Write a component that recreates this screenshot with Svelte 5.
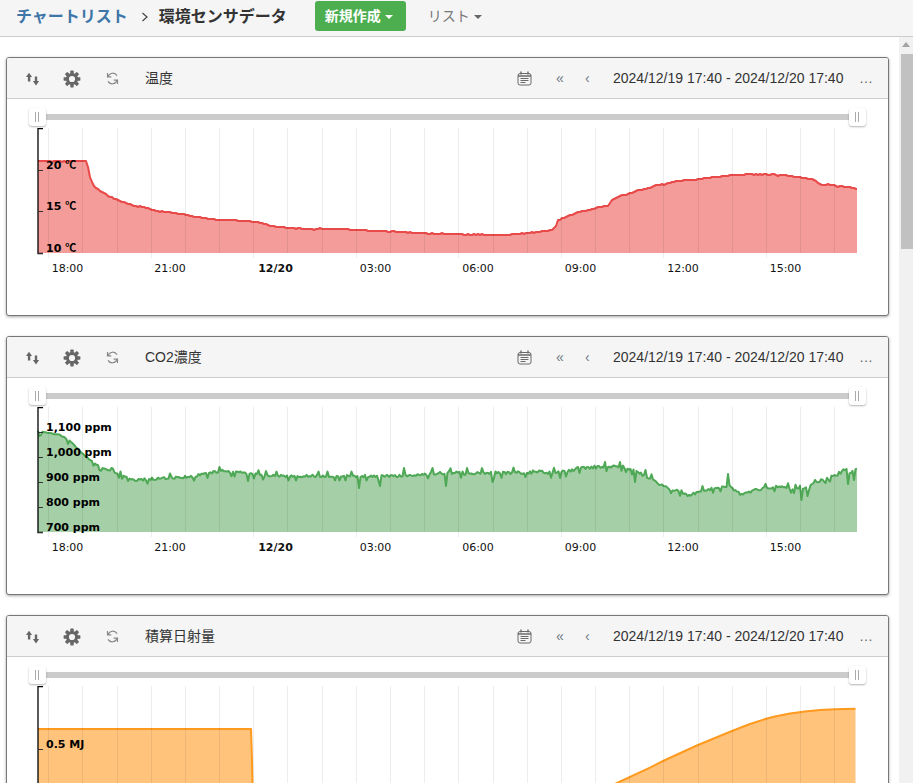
<script>
  const gridXs = Array.from({ length: 24 }, (_, i) => Math.round(48.3 + i * 34.17) + 0.5);
  const timeLabels = [
    { x: 67.5, t: '18:00' }, { x: 170, t: '21:00' }, { x: 275.5, t: '12/20', bold: true },
    { x: 375.5, t: '03:00' }, { x: 478, t: '06:00' }, { x: 580.5, t: '09:00' },
    { x: 683, t: '12:00' }, { x: 785.5, t: '15:00' }
  ];

  const tempBase = [[38,161],[50,161.5],[58,161],[65,161.5],[75,161],[86,161],[88,167],[90,177],[93,185],[100,191],[110,197],[120,201],[135,206],[145,207],[152,210],[165,212],[183,214],[190,216],[198,217],[212,219],[225,220],[250,221],[265,224],[270,226],[290,228],[310,229],[315,230],[319,228],[325,229],[340,229],[380,231],[420,233],[460,234.5],[480,234.5],[500,235],[530,233],[552,230],[556,226],[558,220],[566,217],[580,212],[595,208],[608,206],[612,200],[623,195],[630,193],[640,190],[650,188],[655,185],[665,184.5],[672,182],[680,181],[700,179],[712,177],[725,176],[740,174.5],[775,174.5],[778,176],[782,175],[795,177],[812,179],[818,183],[822,185],[828,184],[835,186],[848,187],[857,189]];

  const co2Base = [[38,431],[60,435],[70,441],[85,456],[100,467],[118,474],[135,480],[165,478],[190,477],[205,474],[220,471],[245,473],[270,476],[300,476],[340,476],[400,476],[440,473],[500,473],[530,472],[560,473],[580,468],[600,467],[620,466],[630,469],[650,478],[665,487],[680,491],[690,496],[700,491],[720,487],[730,486],[740,494],[760,489],[780,486],[800,490],[815,483],[830,480],[835,473],[857,471]];
  const co2Spikes = { 40:436, 68:444, 87:460, 210:481, 220:467, 248:481, 312:485, 342:469, 359:488, 380:486, 404:468, 417:483, 433:468, 446:486, 493:482, 567:466, 591:462, 605:462, 620:462, 635:482, 646:470, 681:505, 699:482, 728:474, 732:493, 783:497, 789:478, 802:500, 808:496, 815:480, 834:467, 848:484, 854:480 };

  function at(pts, x) {
    for (let i = 1; i < pts.length; i++) {
      const [a, b] = [pts[i - 1], pts[i]];
      if (x <= b[0]) return a[1] + (b[1] - a[1]) * (x - a[0]) / (b[0] - a[0]);
    }
    return pts[pts.length - 1][1];
  }
  function rnd(x) {
    const s = Math.sin(x * 12.9898) * 43758.5453;
    return s - Math.floor(s);
  }

  const temp = [];
  for (let x = 38; x <= 857; x += 2) {
    temp.push([x, Math.round(at(tempBase, x) + (rnd(x) - 0.5) * 0.8)]);
  }
  temp.push([857, 189]);

  const co2 = [];
  for (let x = 38; x <= 857; x += 1.5) {
    const k = Math.round(x);
    const r = rnd(x);
    let amp = x > 130 ? 3 : 1;
    if (x > 430 && x < 600) amp = 4;
    if (x > 640 && x < 700) amp = 3.5;
    if (x > 820) amp = 7;
    const noise = (r - 0.5) * amp + (r > 0.93 ? 3 : 0) - (r < 0.05 ? 3 : 0);
    co2.push([x, +(co2Spikes[k] ?? at(co2Base, x) + noise).toFixed(1)]);
  }

  const solar = [[38,729],[251,729],[252,760],[253,811],[560,811],[617,783],[650,767.7],[663,761],[698,745],[732,731],[750,724],[767,718.5],[775,716.5],[790,713.5],[805,711.5],[820,710],[835,709.3],[855.5,708.7]];

  const charts = [
    {
      title: '温度', data: temp, offset: 0, right: 857, line: '#e84a4a', fill: '#f39c99', showX: true,
      ticks: [{ y: 170, t: '20', u: '℃' }, { y: 211, t: '15', u: '℃' }, { y: 253, t: '10', u: '℃' }]
    },
    {
      title: 'CO2濃度', data: co2, offset: 279, right: 857, line: '#4ea855', fill: '#a5cfa6', showX: true,
      ticks: [{ y: 432, t: '1,100 ppm' }, { y: 457, t: '1,000 ppm' }, { y: 482, t: '900 ppm' }, { y: 507, t: '800 ppm' }, { y: 532, t: '700 ppm' }]
    },
    {
      title: '積算日射量', data: solar, offset: 558, right: 855.5, line: '#ff9a1f', fill: '#ffc37c', showX: false,
      ticks: [{ y: 749, t: '0.5 MJ' }]
    }
  ];

  const linePts = (c) => c.data.map(([x, y]) => `${x},${y - c.offset}`).join(' ');
  const areaPts = (c) => `38,253 ${linePts(c)} ${c.right},253`;
  const teeth = [0, 45, 90, 135, 180, 225, 270, 315];
</script>

<div class="page">
  <nav class="navbar">
    <a class="crumb">チャートリスト</a>
    <svg class="sep" width="8" height="12" viewBox="0 0 8 12"><path d="M1.5 2l4.5 4-4.5 4" /></svg>
    <span class="current">環境センサデータ</span>
    <button class="new">新規作成<i class="caret white"></i></button>
    <span class="list">リスト<i class="caret"></i></span>
  </nav>

  <div class="content">
    <main>
      {#each charts as c}
        <section class="panel">
          <header>
            <span class="tool sort">
              <svg width="14" height="14" viewBox="0 0 14 14"><path class="solid" d="M3 .8L6.1 5H4.3V9.6H1.9V5H0zM8.8 4.6h2.4V9h1.9L10 13.4 6.9 9h1.9z" /></svg>
            </span>
            <span class="tool gear">
              <svg width="18" height="18" viewBox="-9 -9 18 18">
                {#each teeth as a}<rect class="solid" x="-1.7" y="-8.4" width="3.4" height="4" rx=".6" transform="rotate({a})" />{/each}
                <circle class="ring" r="4.6" />
              </svg>
            </span>
            <span class="tool sync">
              <svg width="15" height="15" viewBox="0 0 15 15" class="refresh"><path d="M3 5.6A5 5 0 0 1 12 4.6M12 9.4A5 5 0 0 1 3 10.4M2.5 2v3.8h3.8M12.5 13V9.2H8.7" /></svg>
            </span>
            <h2>{c.title}</h2>
            <span class="right">
              <svg class="cal" width="15" height="15" viewBox="0 0 15 15"><rect x="1" y="2.5" width="13" height="11.5" rx="2" /><path class="top" d="M4 .5v3M11 .5v3M1 5h13" /><path d="M3.5 7.5h8M3.5 9.5h8M3.5 11.5h5" /></svg>
              <span class="pager dbl">«</span>
              <span class="pager sgl">‹</span>
              <span class="range">2024/12/19 17:40 - 2024/12/20 17:40</span>
              <span class="more">…</span>
            </span>
          </header>
          <div class="slider">
            <span class="handle left"></span>
            <span class="handle end"></span>
          </div>
          <svg class="chart" width="881" height="160" viewBox="7 128 881 160">
            <polygon points={areaPts(c)} fill={c.fill} />
            <polyline points={linePts(c)} fill="none" stroke={c.line} stroke-width="2" stroke-linejoin="round" />
            {#each gridXs as x, i}
              <line class="grid" x1={x} x2={x} y1="128" y2={i % 3 === 0 ? 258 : 253} />
            {/each}
            <path class="axis" d="M43 128.5H38V253.5H43" />
            {#each c.ticks as t}
              <line class="tick" x1="38" x2="43" y1={t.y - c.offset + 0.5} y2={t.y - c.offset + 0.5} />
              <text class="ylabel" x="46" y={t.y - c.offset - 1}>{t.t}{#if t.u}<tspan class="unit" dx="4">{t.u}</tspan>{/if}</text>
            {/each}
            {#if c.showX}
              {#each timeLabels as l}
                <text class="xlabel" class:bold={l.bold} x={l.x} y="272" text-anchor="middle">{l.t}</text>
              {/each}
            {/if}
          </svg>
        </section>
      {/each}
    </main>
    <aside class="scrollbar">
      <span class="arrow"></span>
      <span class="thumb"></span>
    </aside>
  </div>
</div>

<style>
  :global(body) { margin: 0; overflow: hidden; background: #fff; }
  .page {
    height: 783px;
    overflow: hidden;
    display: flex;
    flex-direction: column;
    font-family: "Liberation Sans", "Noto Sans CJK JP", sans-serif;
    font-size: 14px;
    color: #333;
  }
  .navbar {
    flex: none;
    box-sizing: border-box;
    height: 37px;
    background: #f5f5f5;
    border-bottom: 1px solid #ccc;
    display: flex;
    align-items: center;
    padding: 0 0 5px 16px;
  }
  .crumb { font-size: 16px; font-weight: 700; color: #3f76a8; padding-bottom: 2px; }
  .sep { margin: 2px 0 0 13px; }
  .sep path { fill: none; stroke: #444; stroke-width: 1.2; }
  .current { font-size: 16px; font-weight: 700; color: #333; margin-left: 10px; padding-bottom: 2px; }
  .new {
    margin-left: 28px;
    width: 91px;
    height: 30px;
    box-sizing: border-box;
    padding: 0 0 2px 10px;
    border: 0;
    border-radius: 3px;
    background: #4cae4f;
    color: #fff;
    font: 700 14px "Liberation Sans", "Noto Sans CJK JP", sans-serif;
    text-align: left;
  }
  .list { margin-left: 22px; color: #777; padding-bottom: 2px; }
  .caret {
    display: inline-block;
    margin-left: 4px;
    vertical-align: middle;
    border-top: 4px solid #666;
    border-left: 4px solid transparent;
    border-right: 4px solid transparent;
  }
  .caret.white { border-top-color: #fff; }

  .content { flex: 1; display: flex; min-height: 0; }
  main { flex: 1; min-width: 0; padding: 20px 10px 0 6px; }
  .panel {
    box-sizing: border-box;
    height: 259px;
    margin-bottom: 20px;
    border: 1px solid #777;
    border-radius: 3px;
    background: #fff;
    box-shadow: 0 1px 3px rgba(0, 0, 0, .35);
    overflow: hidden;
  }
  header {
    box-sizing: border-box;
    height: 41px;
    background: #f5f5f5;
    border-bottom: 1px solid #ccc;
    display: flex;
    align-items: center;
    padding: 0 0 0 6px;
  }
  .tool { width: 40px; display: flex; justify-content: center; }
  .sort { padding-top: 1px; box-sizing: border-box; }
  .gear { padding-top: 2px; margin-left: -1px; margin-right: 1px; }
  .sync { padding-top: 1px; margin-left: -1px; margin-right: 1px; }
  .solid { fill: #666; }
  .ring { fill: none; stroke: #666; stroke-width: 3; }
  .refresh { fill: none; stroke: #888; stroke-width: 1.2; }
  h2 { margin: 0 0 0 12px; font-size: 14px; font-weight: 400; color: #333; line-height: 1; }
  .right { margin-left: auto; display: flex; align-items: center; }
  .cal { fill: none; stroke: #6a6a6a; stroke-width: 1; margin-right: 24px; }
  .cal .top { stroke-width: 1.4; }
  .pager { color: #6f7b88; font-size: 14px; }
  .dbl { width: 29px; }
  .sgl { width: 28px; }
  .range { color: #333; width: 246px; white-space: nowrap; }
  .more { color: #666; width: 29px; font-size: 14px; }

  .slider {
    position: relative;
    height: 6px;
    margin: 15px 31px 0;
    background: #ccc;
  }
  .handle {
    position: absolute;
    top: -6px;
    box-sizing: border-box;
    width: 17px;
    height: 18px;
    background: #fff;
    border-radius: 3px;
    box-shadow: 0 1px 2px rgba(0, 0, 0, .3);
  }
  .handle::after {
    content: "";
    position: absolute;
    left: 6px;
    top: 4px;
    width: 4px;
    height: 10px;
    border-left: 1px solid #aaa;
    border-right: 1px solid #aaa;
    box-sizing: border-box;
  }
  .left { left: -9px; }
  .end { right: -9px; }

  .chart { display: block; margin-top: 8px; }
  .grid { stroke: rgba(0, 0, 0, .07); stroke-width: 1; }
  .axis { fill: none; stroke: #000; stroke-width: 1.3; }
  .tick { stroke: #333; stroke-width: 1; }
  .ylabel { font: 700 11px "DejaVu Sans", sans-serif; fill: #000; }
  .unit { font-family: "Noto Sans CJK JP", sans-serif; font-size: 11px; font-weight: 700; }
  .xlabel { font: 400 11px "DejaVu Sans", sans-serif; fill: #111; }
  .bold { font-weight: 700; }

  .scrollbar { width: 14px; flex: none; background: #f1f1f1; display: flex; flex-direction: column; align-items: flex-end; }
  .arrow {
    margin: 5px 3px 0 0;
    border-bottom: 5px solid #a3a3a3;
    border-left: 4px solid transparent;
    border-right: 4px solid transparent;
  }
  .thumb { margin-top: 7px; width: 12px; height: 195px; background: #c1c1c1; }
</style>
